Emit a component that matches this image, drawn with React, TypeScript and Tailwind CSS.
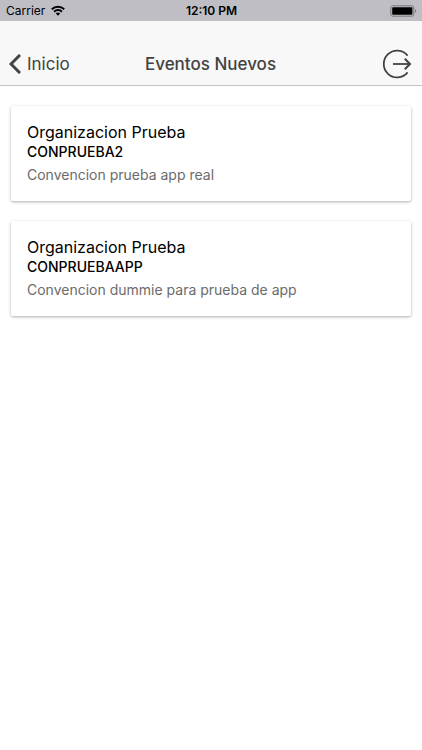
interface Evento {
    id: number,
    organizacion: string,
    clave: string,
    descripcion: string,
}

const eventos: Evento[] = [
    { id: 1, organizacion: "Organizacion Prueba", clave: "CONPRUEBA2", descripcion: "Convencion prueba app real" },
    { id: 2, organizacion: "Organizacion Prueba", clave: "CONPRUEBAAPP", descripcion: "Convencion dummie para prueba de app" },
];

function StatusBar() {
    return (
        <div className="grid grid-cols-3 items-center h-[21px] pl-[6px] pr-[5px] bg-[#bfbec4] text-xs text-black">
            <div className="flex items-center gap-[6px]">
                <span>Carrier</span>
                <svg width="14" height="11" viewBox="0 0 14 11" fill="none" stroke="#000" strokeWidth="2" aria-hidden="true">
                    <path d="M0.8 4.2a8.8 8.8 0 0 1 12.4 0" />
                    <path d="M3.1 6.7a5.5 5.5 0 0 1 7.8 0" />
                    <path d="M7 10.8L4.8 8.5a3.1 3.1 0 0 1 4.4 0z" fill="#000" stroke="none" />
                </svg>
            </div>
            <span className="text-center font-semibold">12:10 PM</span>
            <svg className="justify-self-end" width="27" height="12" viewBox="0 0 27 12" aria-hidden="true">
                <rect x="0.8" y="0.8" width="23" height="10.4" rx="2" fill="none" stroke="#77767a" />
                <rect x="2.2" y="2.2" width="20.2" height="7.6" rx="0.8" fill="#000" />
                <path d="M25 4.2c1.8 0.6 1.8 3 0 3.6z" fill="#77767a" />
            </svg>
        </div>
    );
}

function NavBar() {
    return (
        <header className="grid grid-cols-[1fr_auto_1fr] items-center h-[65px] pt-[21px] pl-[9px] pr-[10px] bg-[#f8f8f8] border-b border-[#c4c4c4] text-[#424242]">
            <button type="button" className="flex items-center gap-[6px] text-[17px] leading-6 cursor-pointer">
                <svg width="12" height="20" viewBox="0 0 12 20" fill="none" stroke="currentColor" strokeWidth="3" aria-hidden="true">
                    <path d="M11 1L2 10l9 9" />
                </svg>
                Inicio
            </button>
            <h1 className="text-[17px] leading-6 font-medium">Eventos Nuevos</h1>
            <button type="button" aria-label="Salir" className="justify-self-end cursor-pointer">
                <svg width="30" height="30" viewBox="0 0 30 30" fill="none" stroke="currentColor" strokeWidth="1.8" aria-hidden="true">
                    <path d="M25.6 6.6A13.4 13.4 0 1 0 25.6 23.4" />
                    <path d="M11 15h17" />
                    <path d="M22.8 9.8L28 15l-5.2 5.2" strokeWidth="2" />
                </svg>
            </button>
        </header>
    );
}

function EventoCard({ evento }: { evento: Evento }) {
    return (
        <article className="px-4 pt-4 pb-[13px] bg-white rounded-xs shadow-[0_1px_3px_rgba(0,0,0,0.32)]">
            <h2 className="text-base leading-5 text-black">{evento.organizacion}</h2>
            <h3 className="text-sm leading-5 font-medium text-black">{evento.clave}</h3>
            <p className="text-sm leading-[26px] text-[#6b6b6b]">{evento.descripcion}</p>
        </article>
    );
}

export default function App() {
    return (
        <div className="min-h-screen bg-white font-[Inter,sans-serif]">
            <StatusBar />
            <NavBar />
            <main className="flex flex-col gap-5 px-[11px] py-5">
                {eventos.map((e) => (
                    <EventoCard key={e.id} evento={e} />
                ))}
            </main>
        </div>
    );
}
